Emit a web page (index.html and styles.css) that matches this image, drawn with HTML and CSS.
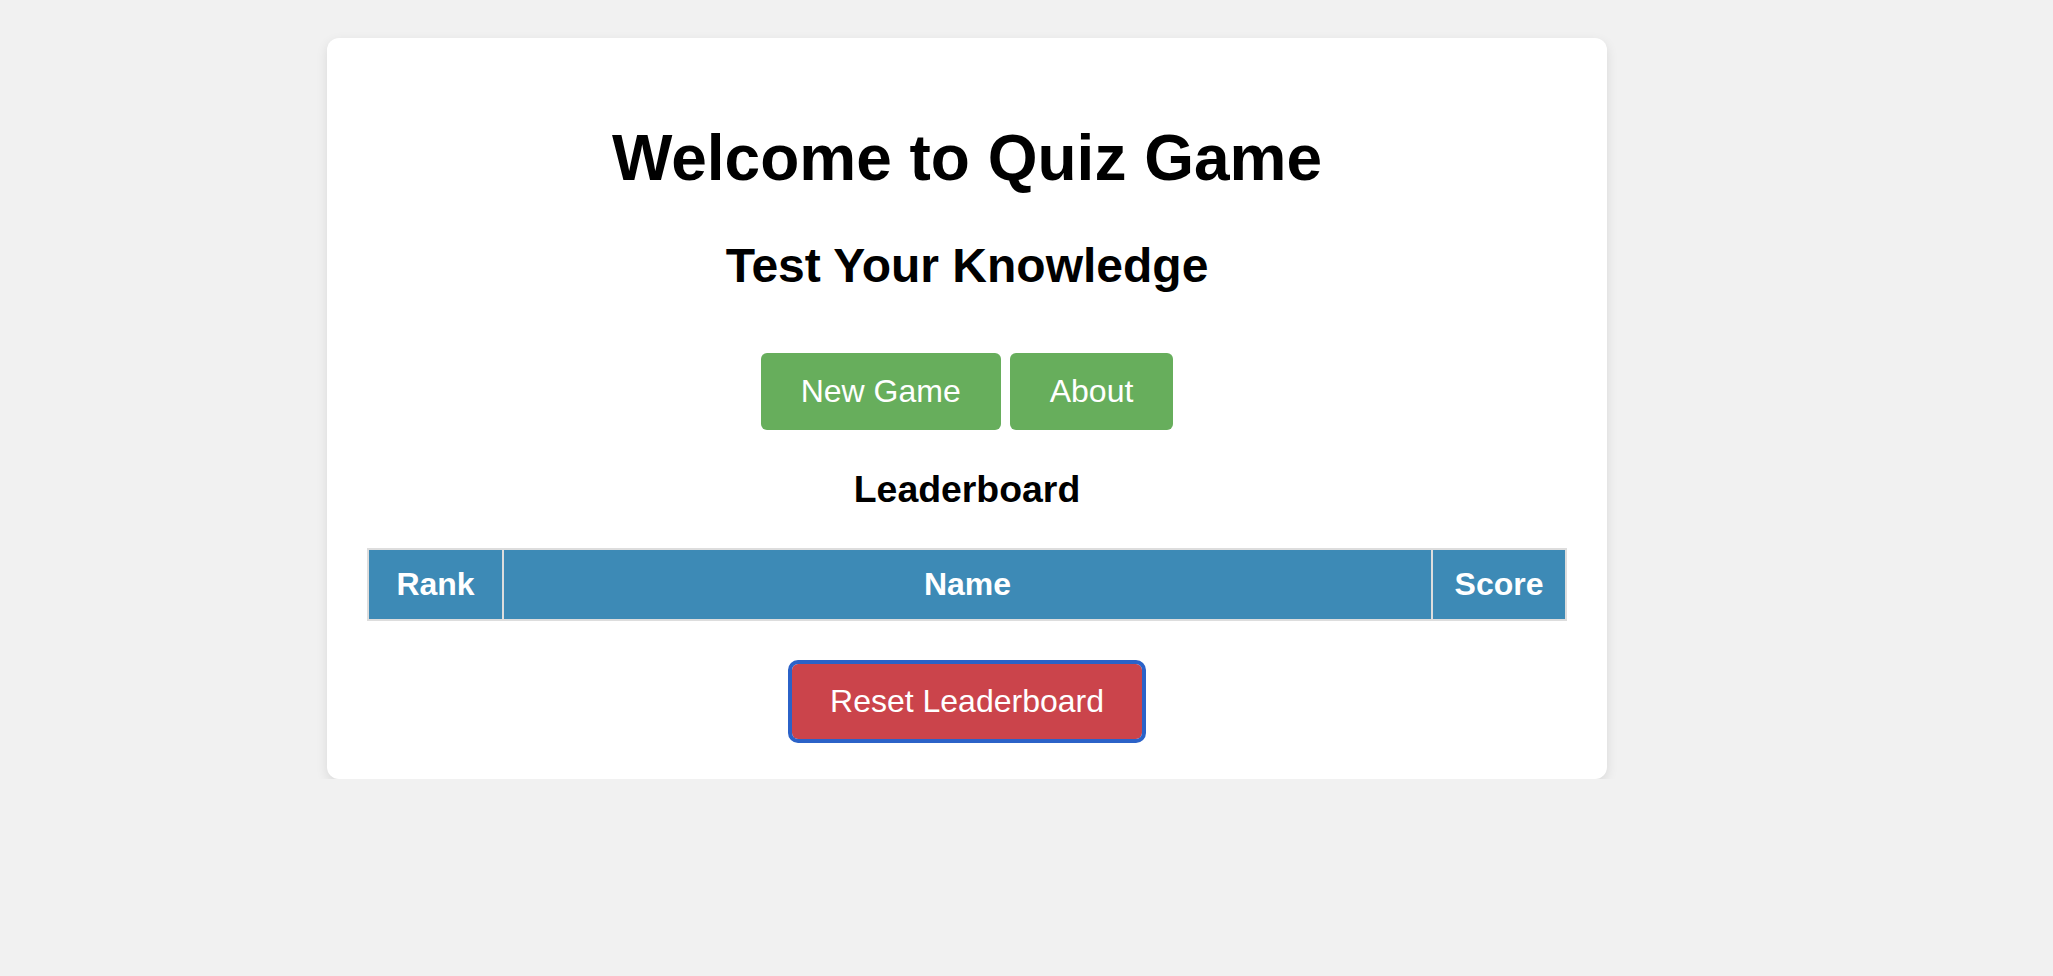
FILE: index.html
```html
<!DOCTYPE html>
<html lang="en">
<head>
<meta charset="utf-8">
<title>Quiz Game</title>
<link rel="stylesheet" href="styles.css">
</head>
<body>
  <div class="card">
    <h1 class="title">Welcome to Quiz Game</h1>
    <h2 class="subtitle">Test Your Knowledge</h2>
    <div class="actions">
      <button class="btn btn-green">New Game</button>
      <button class="btn btn-green">About</button>
    </div>
    <h3 class="board-title">Leaderboard</h3>
    <table class="board">
      <thead>
        <tr>
          <th class="col-rank">Rank</th>
          <th class="col-name">Name</th>
          <th class="col-score">Score</th>
        </tr>
      </thead>
      <tbody></tbody>
    </table>
    <button class="btn btn-red">Reset Leaderboard</button>
  </div>
</body>
</html>
```

FILE: styles.css
```css
html, body {
  margin: 0;
  padding: 0;
}
body {
  background: #f1f1f1;
  font-family: "Liberation Sans", Arial, sans-serif;
  color: #000;
}
.card {
  box-sizing: border-box;
  width: 1280px;
  margin: 38px 0 0 327px;
  padding: 40px;
  background: #fff;
  border-radius: 12px;
  box-shadow: 0 4px 12px rgba(0, 0, 0, 0.1);
  text-align: center;
}
.title {
  font-size: 64px;
  font-weight: bold;
  margin: 43px 0;
}
.subtitle {
  font-size: 48px;
  font-weight: bold;
  margin: 40px 0;
}
.actions {
  display: flex;
  justify-content: center;
  gap: 9px;
  margin-top: 60px;
}
.btn {
  font-family: "Liberation Sans", Arial, sans-serif;
  font-size: 32px;
  color: #fff;
  border: none;
  border-radius: 6px;
  cursor: pointer;
  line-height: normal;
}
.btn-green {
  background: #67ae5c;
  padding: 20px 40px;
}
.board-title {
  font-size: 37.4px;
  font-weight: bold;
  margin: 38px 0 37px;
}
.board {
  width: 100%;
  border-collapse: collapse;
}
.board th {
  background: #3d8ab6;
  color: #fff;
  font-size: 32px;
  font-weight: bold;
  padding: 16px;
  border: 2px solid #dddddd;
}
.col-rank {
  width: 135px;
  box-sizing: border-box;
}
.col-score {
  width: 134px;
  box-sizing: border-box;
}
.btn-red {
  background: #cb444b;
  padding: 19px 38px;
  margin-top: 43px;
  outline: 4px solid #2b62c8;
}
```
